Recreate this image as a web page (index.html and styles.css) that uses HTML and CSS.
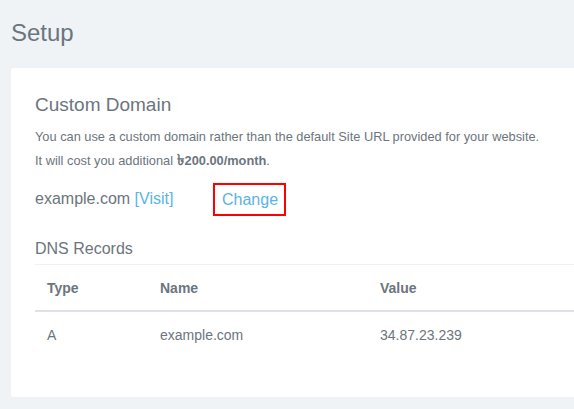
FILE: index.html
```html
<!DOCTYPE html>
<html>
<head>
<meta charset="utf-8">
<link rel="stylesheet" href="styles.css">
</head>
<body>
<div class="page">
  <h1 class="title">Setup</h1>
  <div class="card">
    <h2 class="card-title">Custom Domain</h2>
    <p class="desc">You can use a custom domain rather than the default Site URL provided for your website.<br>It will cost you additional <strong><span class="taka">৳</span>200.00/month</strong>.</p>
    <div class="domain-row">
      <span class="domain">example.com <a class="link">[Visit]</a></span>
      <a class="change">Change</a>
    </div>
    <h3 class="sub-title">DNS Records</h3>
    <table class="dns">
      <thead>
        <tr><th class="c-type">Type</th><th class="c-name">Name</th><th>Value</th></tr>
      </thead>
      <tbody>
        <tr><td>A</td><td>example.com</td><td>34.87.23.239</td></tr>
      </tbody>
    </table>
  </div>
</div>
</body>
</html>
```
FILE: styles.css
```css
html, body {
  margin: 0;
  padding: 0;
  background: #eff3f6;
  overflow: hidden;
}
body {
  font-family: "Liberation Sans", Arial, sans-serif;
  color: #6c757d;
}
.page {
  padding: 0 0 0 11px;
  width: 900px;
}
.title {
  font-size: 24px;
  font-weight: normal;
  line-height: 1.2;
  margin: 0;
  padding-top: 19px;
  height: 49px;
  color: #6c757d;
}
.card {
  background: #fff;
  border-radius: 3px;
  padding: 26px 24px 36px;
}
.card-title {
  font-size: 19px;
  font-weight: normal;
  line-height: 1.2;
  margin: 0;
}
.desc {
  font-size: 12.8px;
  line-height: 24px;
  margin: 8px 0 0;
}
.desc strong {
  font-weight: bold;
}
.taka {
  font-size: 15px;
  font-weight: bold;
  line-height: 0;
  margin-right: 1px;
}
.domain-row {
  display: flex;
  align-items: center;
  margin-top: 10px;
  font-size: 16px;
}
.domain {
  width: 178px;
}
.link {
  color: #5ab4e5;
}
.change {
  color: #5ab4e5;
  border: 2px solid #ff0000;
  padding: 5px 6px 5px 7px;
  line-height: 19px;
}
.sub-title {
  font-size: 16px;
  font-weight: normal;
  line-height: 19px;
  margin: 23px 0 0;
}
.dns {
  margin-top: 6px;
  width: 840px;
  border-collapse: collapse;
  font-size: 14px;
}
.dns th, .dns td {
  text-align: left;
  padding: 12px;
  line-height: 20px;
}
.dns th {
  padding-top: 13px;
  border-top: 1px solid #eef0f2;
  border-bottom: 2px solid #dee2e6;
  font-weight: bold;
}
.dns td {
  padding-top: 13px;
  padding-bottom: 16px;
}
.c-type { width: 89px; }
.c-name { width: 196px; }
```
